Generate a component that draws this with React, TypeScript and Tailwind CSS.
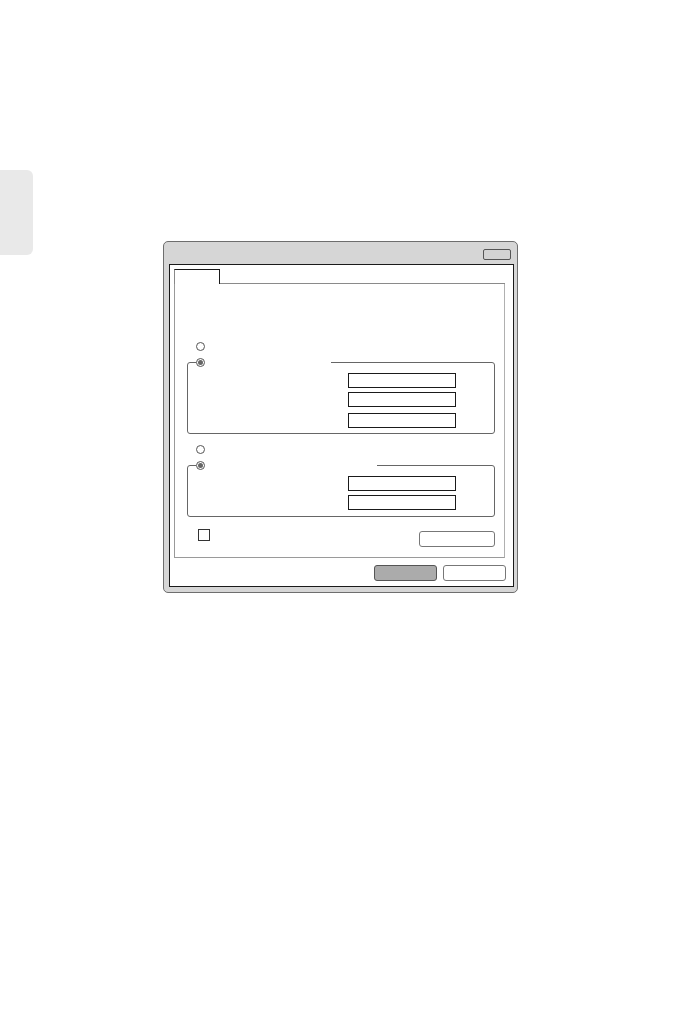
import React from "react";

function Radio({ checked }: { checked?: boolean }) {
  return (
    <div className="w-[9px] h-[9px] rounded-full border border-[#555] bg-white flex items-center justify-center shrink-0">
      {checked ? <div className="w-[5px] h-[5px] rounded-full bg-[#666]" /> : null}
    </div>
  );
}

function Field({ className = "" }: { className?: string }) {
  return <div className={"ml-[160px] w-[108px] h-[15px] border-[1.5px] border-[#1a1a1a] bg-white " + className} />;
}

export default function App() {
  return (
    <div className="w-[680px] h-[1020px] bg-white flex items-start" style={{ fontFamily: "'Liberation Sans', Arial, sans-serif" }}>
      <div className="mt-[170px] w-[33px] h-[85px] bg-[#e9e9e9] rounded-r-[6px] shrink-0" />
      <div className="mt-[241px] ml-[130px] w-[355px] h-[352px] border-[1.5px] border-[#6e6e6e] rounded-[5px] bg-[#d6d6d6] flex flex-col">
        <div className="h-[21.5px] flex justify-end items-start pt-[7px] pr-[6.5px]">
          <div className="w-[28px] h-[11px] border border-[#555] rounded-[2px] bg-[#d3d3d3]" />
        </div>
        <div className="ml-[4.5px] mr-[3.5px] mb-[5px] flex-1 border-[1.5px] border-[#1a1a1a] bg-white flex flex-col">
          <div className="ml-[4.5px] mr-[7.5px] mt-[4px] flex flex-col">
            <div className="flex items-end h-[15px]">
              <div className="w-[46px] h-[15px] border-l border-t-[1.5px] border-r-[1.5px] border-l-[#888] border-t-[#1a1a1a] border-r-[#1a1a1a] bg-white" />
              <div className="flex-1 border-b border-[#8a8a8a]" />
            </div>
            <div className="h-[274px] border-l border-r border-b border-l-[#999] border-r-[#b0b0b0] border-b-[#9a9a9a] pl-[12px] pr-[9px] flex flex-col">
              <div className="mt-[58px] ml-[9px]">
                <Radio />
              </div>
              <div className="mt-[11px] border border-[#666] rounded-[3px] flex flex-col">
                <div className="-mt-[5px] ml-[8px] flex items-center h-[9px]">
                  <div className="bg-white w-[135px] h-[9px] flex items-center">
                    <Radio checked />
                  </div>
                </div>
                <Field className="mt-[6px]" />
                <Field className="mt-[4px]" />
                <Field className="mt-[6px]" />
                <div className="h-[5px]" />
              </div>
              <div className="mt-[11px] ml-[9px]">
                <Radio />
              </div>
              <div className="mt-[11px] border border-[#666] rounded-[3px] flex flex-col">
                <div className="-mt-[5px] ml-[8px] flex items-center h-[9px]">
                  <div className="bg-white w-[181px] h-[9px] flex items-center">
                    <Radio checked />
                  </div>
                </div>
                <Field className="mt-[6px]" />
                <Field className="mt-[4.5px]" />
                <div className="h-[5.5px]" />
              </div>
              <div className="mt-[12.5px] flex justify-between items-start">
                <div className="ml-[11px] w-[12px] h-[12px] border border-[#333] bg-white" />
                <div className="mt-[2px] w-[76px] h-[16px] border border-[#777] rounded-[3px] bg-white" />
              </div>
            </div>
          </div>
          <div className="mt-[7px] mr-[7px] flex justify-end gap-[6px]">
            <div className="w-[63px] h-[16px] border border-[#555] rounded-[3px] bg-[#ababab]" />
            <div className="w-[63px] h-[16px] border border-[#777] rounded-[3px] bg-white" />
          </div>
        </div>
      </div>
    </div>
  );
}
